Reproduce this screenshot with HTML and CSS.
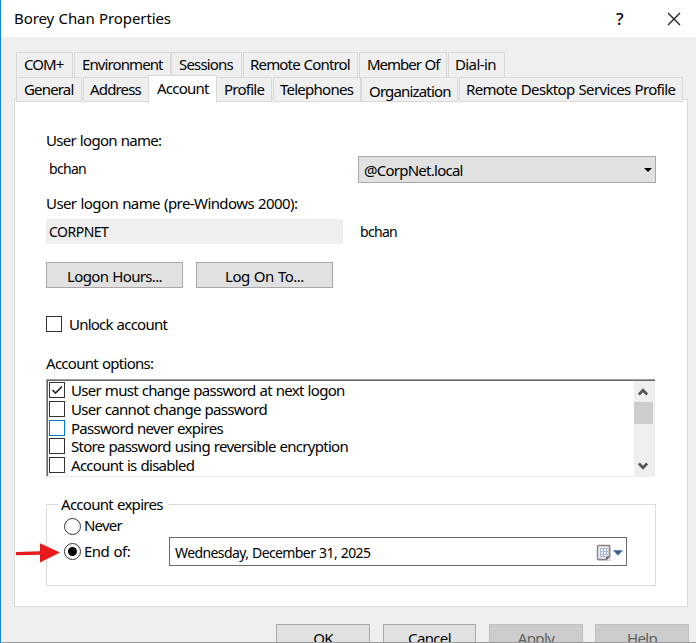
FILE: index.html
```html
<!DOCTYPE html>
<html lang="en">
<head>
<meta charset="utf-8">
<title>Borey Chan Properties</title>
<link rel="stylesheet" href="styles.css">
</head>
<body>
<div class="window">
  <header class="titlebar">
    <span class="title">Borey Chan Properties</span>
    <span class="help">?</span>
    <svg class="close" width="14" height="14" viewBox="0 0 14 14"><path d="M1 1L13 13M13 1L1 13"/></svg>
  </header>
  <nav class="tabs">
    <div class="row upper">
      <span class="tab com">COM+</span><span class="tab environment">Environment</span><span class="tab sessions">Sessions</span><span class="tab remote">Remote Control</span><span class="tab member">Member Of</span><span class="tab dialin">Dial-in</span>
    </div>
    <div class="row lower">
      <span class="tab general">General</span><span class="tab address">Address</span><span class="tab account">Account</span><span class="tab profile">Profile</span><span class="tab telephones">Telephones</span><span class="tab organization">Organization</span><span class="tab rdsp">Remote Desktop Services Profile</span>
    </div>
  </nav>
  <main class="panel">
    <div class="label logon">User logon name:</div>
    <div class="line names">
      <span class="name">bchan</span>
      <div class="select"><span>@CorpNet.local</span><svg width="8" height="4" viewBox="0 0 8 4"><path d="M0 0H8L4 4Z"/></svg></div>
    </div>
    <div class="label pre2000">User logon name (pre-Windows 2000):</div>
    <div class="line domain"><span class="readonly">CORPNET</span><span class="name">bchan</span></div>
    <div class="line actions"><div class="button hours">Logon Hours...</div><div class="button logonto">Log On To...</div></div>
    <div class="line unlock"><i class="box"></i><span>Unlock account</span></div>
    <div class="label options">Account options:</div>
    <div class="listbox">
      <div class="list">
        <div class="item"><i class="box"><svg width="14" height="14" viewBox="0 0 14 14"><path d="M2.5 7L5.5 10L12 3.5"/></svg></i><span>User must change password at next logon</span></div>
        <div class="item"><i class="box"></i><span>User cannot change password</span></div>
        <div class="item"><i class="box hot"></i><span>Password never expires</span></div>
        <div class="item"><i class="box"></i><span>Store password using reversible encryption</span></div>
        <div class="item"><i class="box"></i><span>Account is disabled</span></div>
      </div>
      <div class="scrollbar">
        <svg width="10" height="8" viewBox="0 0 10 8"><path d="M.8 6.6L5 2.2L9.2 6.6"/></svg>
        <div class="thumb"></div>
        <svg class="down" width="10" height="8" viewBox="0 0 10 8"><path d="M.8 1.4L5 5.8L9.2 1.4"/></svg>
      </div>
    </div>
    <section class="group">
      <div class="legend">Account expires</div>
      <div class="radio-row never"><i class="radio"></i><span>Never</span></div>
      <div class="radio-row end">
        <i class="radio on"></i><span class="endof">End of:</span>
        <div class="date"><span>Wednesday, December 31, 2025</span>
          <svg class="calendar" width="16" height="18" viewBox="0 0 16 18"><path class="shade" d="M2 2H15V17H2Z"/><path class="page" d="M2.5 1.5H13.5V12L10.5 15.5H2.5Q1.5 15.5 1.5 14.5V2.5Q1.5 1.5 2.5 1.5Z"/><path class="grid" d="M4 4.5H12M4 7.5H12M4 10.5H12M4.5 4V13M7.5 4V13M10.5 4V11M4 12.5H10"/><path class="fold" d="M10 15.5V12.5H14Z"/></svg>
          <svg class="drop" width="10" height="6" viewBox="0 0 10 6"><path d="M0 .3H10L5 5.5Z"/></svg>
        </div>
      </div>
      <svg class="arrow" width="44" height="20" viewBox="0 0 44 20"><path d="M0 9L24 8.2V.3L44 9.5L24 19.4V11.8L0 12.3Z"/></svg>
    </section>
  </main>
  <footer class="footer"><div class="button ok">OK</div><div class="button cancel">Cancel</div><div class="button off apply">Apply</div><div class="button off helpb">Help</div></footer>
</div>
</body>
</html>
```
FILE: styles.css
```css
* { box-sizing: border-box; }
body { margin: 0; overflow: hidden; font: 15px/20px "Noto Sans", "Open Sans", sans-serif; letter-spacing: -.71px; word-spacing: .7px; color: #000; white-space: nowrap; }
svg { display: block; flex: none; }
.window { width: 696px; height: 643px; overflow: hidden; background: #efefef; border-left: 1px solid #1883d7; border-bottom: 1px solid #999; }
.titlebar { height: 37px; background: #fff; display: flex; align-items: center; padding: 0 15px 0 13px; }
.title { flex: 1; letter-spacing: -.1px; padding-bottom: 2px; }
.help { font-size: 17px; font-weight: 500; width: 10px; margin-right: 41px; }
.close { fill: none; stroke: #222; stroke-width: 1.4; }

.tabs { padding: 15px 0 0 15px; position: relative; z-index: 1; }
.row { display: flex; height: 25px; }
.tab { border: 1px solid #d9d9d9; background: #efefef; height: 25px; line-height: 22px; padding-left: 7px; flex: none; letter-spacing: -.83px; }
.upper .tab { border-bottom: 0; }
.com { width: 57px; margin-right: 1px; letter-spacing: -.95px; }
.environment { width: 97px; letter-spacing: -.9px; }
.sessions { width: 71px; margin-right: 1px; }
.remote { width: 115px; margin-right: 1px; padding-left: 6px; letter-spacing: -.83px; }
.member { width: 88px; margin-right: 1px; letter-spacing: -1px; }
.dialin { width: 57px; padding-left: 6px; letter-spacing: -.6px; }
.general { width: 66px; margin-right: 1px; }
.address { width: 66px; padding-left: 6px; }
.account { width: 69px; height: 28px; margin: -2px -1px 0; padding-left: 8px; line-height: 24px; background: #fff; border-bottom: 0; position: relative; letter-spacing: -.75px; }
.profile { width: 56px; margin-right: 1px; letter-spacing: -.75px; }
.telephones { width: 88px; padding-left: 6px; letter-spacing: -.75px; }
.organization { width: 97px; margin-right: 1px; line-height: 26px; }
.rdsp { width: 224px; padding-left: 6px; letter-spacing: -.65px; }

.panel { width: 674px; height: 508px; margin: -3px 0 0 13px; padding: 30px 31px 0 31px; border: 1px solid #d9d9d9; background: #fff; display: flex; flex-direction: column; align-items: stretch; }
.line { display: flex; align-items: center; }
.label { height: 20px; flex: none; }
.names { height: 27px; margin-top: 6px; }
.name { padding: 1px 0 0 3px; font-size: 14px; letter-spacing: -.7px; }
.names .name { width: 312px; padding: 0 0 1px 3px; }
.select { width: 298px; height: 27px; border: 1px solid #a8a8a8; background: #e1e1e1; display: flex; align-items: center; justify-content: space-between; padding: 1px 3px 0 5px; letter-spacing: -.75px; }
.pre2000 { margin-top: 10px; letter-spacing: -.58px; }
.domain { margin-top: 6px; height: 25px; }
.readonly { width: 297px; height: 25px; line-height: 25px; background: #efefef; padding-left: 3px; margin-right: 14px; font-size: 14px; letter-spacing: -.5px; }
.actions { margin-top: 18px; gap: 13px; }
.button { width: 137px; height: 26px; border: 1px solid #a8a8a8; background: #e1e1e1; text-align: center; line-height: 27px; letter-spacing: -.65px; }
.logonto { letter-spacing: -.5px; }
.unlock { margin-top: 26px; height: 20px; gap: 7px; letter-spacing: -.77px; }
.box { width: 16px; height: 16px; border: 1px solid #333; background: #fff; flex: none; }
.box.hot { border-color: #0078d7; }
.box svg { fill: none; stroke: #222; stroke-width: 1.7; }
.options { margin-top: 19px; }
.listbox { height: 98px; margin-top: 6px; display: flex; border-left: 1px solid #a0a0a0; border-top: 1px solid #a0a0a0; border-bottom: 1px solid #eee; width: 609px; }
.list { flex: 1; border-left: 1px solid #696969; border-top: 1px solid #696969; padding: 0 0 0 1px; }
.item { display: flex; align-items: center; height: 18.65px; gap: 6px; }
.scrollbar { width: 21px; border-top: 1px solid #696969; background: #efefef; display: flex; flex-direction: column; padding: 7px 0 6px; }
.scrollbar svg { margin-left: 4px; fill: none; stroke: #555; stroke-width: 2.8; }
.thumb { width: 19px; height: 22px; background: #cdcdcd; margin-top: 6px; }
.scrollbar .down { margin-top: auto; }

.group { position: relative; width: 610px; height: 82px; margin-top: 27px; border: 1px solid #dcdcdc; padding-left: 12px; }
.legend { width: 109px; height: 20px; margin-top: -11px; padding-left: 2px; background: #fff; }
.radio-row { display: flex; align-items: center; height: 20px; padding-left: 5px; }
.never { margin-top: 2px; letter-spacing: -.8px; }
.never span, .endof { padding-bottom: 2px; }
.end { height: 29px; margin-top: 1px; }
.radio { width: 17px; height: 17px; border: 1px solid #333; border-radius: 50%; background: #fff; margin-right: 3px; flex: none; display: flex; align-items: center; justify-content: center; }
.on::after { content: ""; width: 9px; height: 9px; border-radius: 50%; background: #000; }
.endof { width: 85px; letter-spacing: -.5px; }
.date { width: 458px; height: 29px; border: 1px solid #6b6b6b; display: flex; align-items: center; padding: 2px 3px 0 5px; }
.date span { flex: 1; font-size: 14px; letter-spacing: -.6px; }
.calendar { margin-right: 1px; }
.page { fill: #e7edf5; stroke: #8c8080; stroke-width: 1.4; }
.shade { fill: #ddd; }
.grid { fill: none; stroke: #aebacb; stroke-width: 1; }
.fold { fill: #625b5b; }
.drop { fill: #3e5c96; }
.arrow { position: absolute; left: -31px; top: 38px; fill: #e81a1c; }

.footer { display: flex; padding: 17px 0 0 275px; }
.footer .button { width: 94px; height: 28px; line-height: 27px; }
.footer .ok { margin-right: 13px; }
.footer .cancel { width: 93px; margin-right: 13px; }
.footer .off { background: #ccc; border-color: #bfbfbf; color: #606060; }
.footer .apply { margin-right: 12px; }
```
